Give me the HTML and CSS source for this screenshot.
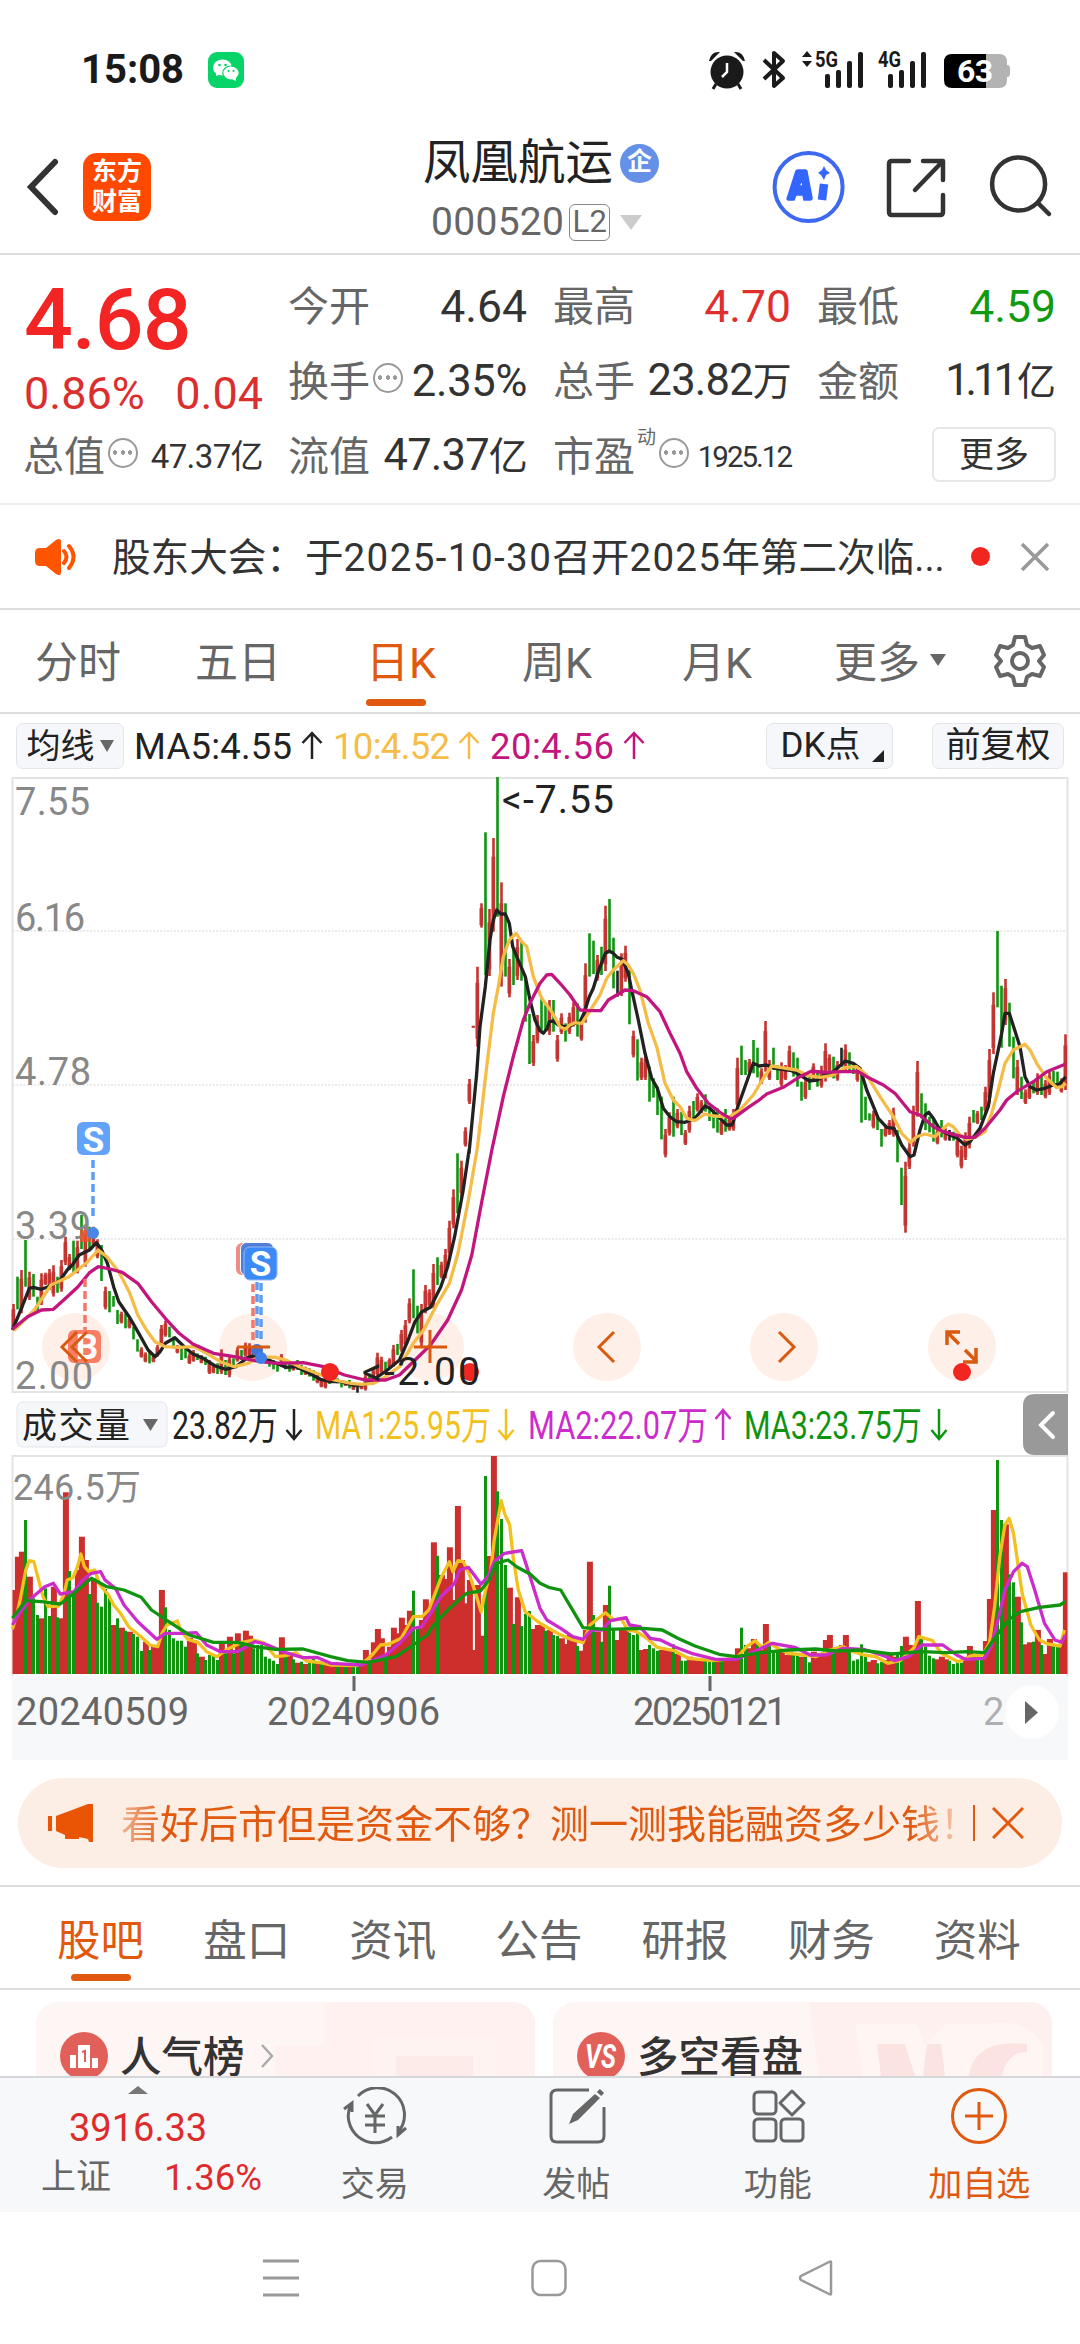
FILE: index.html
```html
<!DOCTYPE html>
<html lang="zh-CN">
  <head>
    <meta charset="utf-8" />
    <meta name="viewport" content="width=device-width, initial-scale=1.0" />
    <title>凤凰航运 000520</title>
    <link rel="stylesheet" href="styles.css">
  </head>
  <body>
    <div class="statusbar">
      <span class="clock">15:08</span>
      <svg class="wechat" width="36" height="36" viewBox="0 0 36 36">
        <rect width="36" height="36" rx="9" fill="#07d468"/>
        <ellipse cx="14.500" cy="15.500" rx="9.500" ry="8" fill="#fff"/>
        <path d="M8 20v4l5-2z" fill="#fff"/>
        <ellipse cx="23" cy="21" rx="8.200" ry="7" fill="#fff" stroke="#07d468" stroke-width="1.200"/>
        <path d="M24 27l4 2v-4z" fill="#fff"/>
        <circle cx="11.500" cy="13" r="1.300" fill="#07d468"/><circle cx="17.500" cy="13" r="1.300" fill="#07d468"/>
        <circle cx="20.500" cy="19" r="1.100" fill="#07d468"/><circle cx="25.500" cy="19" r="1.100" fill="#07d468"/>
      </svg>
      <svg class="sysicons" width="306" height="40" viewBox="0 0 306 40">
        <g fill="#1a1a1a">
          <circle cx="19" cy="22" r="16.500"/>
          <path d="M1 11Q3 1 12 2L3 11zM37 11Q35 1 26 2L35 11z"/>
          <path d="M8 34l-3 5M30 34l3 5" stroke="#1a1a1a" stroke-width="3"/>
          <path d="M19 13v9l-5 5" fill="none" stroke="#fff" stroke-width="2.500"/>
          <path d="M56 10l19 18-9 8V3l9 8-19 18" fill="none" stroke="#1a1a1a" stroke-width="4" stroke-linejoin="round"/>
          <path d="M94 7l5-6 5 6zM94 11l5 6 5-6z"/>
          <rect x="117" y="24" width="5" height="14" rx="2"/><rect x="128" y="20" width="5" height="18" rx="2"/><rect x="139" y="11" width="5" height="27" rx="2"/><rect x="150" y="2" width="5" height="36" rx="2"/>
          <rect x="180" y="24" width="5" height="14" rx="2"/><rect x="191" y="20" width="5" height="18" rx="2"/><rect x="202" y="11" width="5" height="27" rx="2"/><rect x="213" y="2" width="5" height="36" rx="2"/>
          <text class="net" x="107" y="17" textLength="23" lengthAdjust="spacingAndGlyphs">5G</text>
          <text class="net" x="170" y="17" textLength="23" lengthAdjust="spacingAndGlyphs">4G</text>
        </g>
        <path d="M278 4h13q8 0 8 8v3q3 0 3 3v6q0 3-3 3v3q0 8-8 8h-13z" fill="#b3b3b3"/>
        <path d="M278 4h-34q-8 0-8 8v18q0 8 8 8h34z" fill="#000"/>
        <text class="batt" x="249" y="32" textLength="36">63</text>
      </svg>
    </div>

    <div class="header">
      <svg class="back" width="34" height="60" viewBox="0 0 34 60"><path d="M30 5L6 30l24 25" fill="none" stroke="#333" stroke-width="6" stroke-linecap="round"/></svg>
      <div class="applogo">东方<br>财富</div>
      <div class="name">
        <div class="title"><span>凤凰航运</span><span class="qi">企</span></div>
        <div class="code">000520<span class="l2">L2</span><i class="tri"></i></div>
      </div>
      <svg class="tools" width="290" height="76" viewBox="0 0 290 76" fill="none" stroke="#333" stroke-width="4.500" stroke-linecap="round" stroke-linejoin="round">
        <circle cx="38.600" cy="38" r="34" stroke="#3d68f0" stroke-width="4"/>
        <path d="M17 50l9-28q1-1 2-1h7q2 0 2 2l5 26q0 2-2 2h-6l-1-5h-7l-2 5h-6zM29 37h4l-1-6z" fill="#3366ff" fill-rule="evenodd" stroke="#3366ff" stroke-width="1.500"/>
        <path d="M54 35l-2 16" stroke="#3366ff" stroke-width="8.500" stroke-linecap="butt"/>
        <path d="M54 17l2 4 4 3-4 2-2 5-3-5-3-2 4-3z" fill="#3366ff" stroke="none"/>
        <path d="M139 12h-17q-3 0-3 3v48q0 3 3 3h48q3 0 3-3V46M153 12h20v19M172 13l-27 28"/>
        <circle cx="248.600" cy="35" r="26.500"/><path d="M268 54l11 11"/>
      </svg>
    </div>

    <div class="quote">
      <div class="now">
        <div class="price">4.68</div>
        <div class="change"><span>0.86%</span><span>0.04</span></div>
        <div class="item"><b>总值</b><i class="more-dot"></i><em class="small">47.37亿</em></div>
      </div>
      <div class="stats">
        <div class="item"><b>今开</b><em>4.64</em></div>
        <div class="item"><b>最高</b><em class="up">4.70</em></div>
        <div class="item"><b>最低</b><em class="down">4.59</em></div>
        <div class="item"><b>换手</b><i class="more-dot"></i><em class="rate">2.35%</em></div>
        <div class="item"><b>总手</b><em class="amount">23.82<small>万</small></em></div>
        <div class="item"><b>金额</b><em class="amount ones">1.11<small>亿</small></em></div>
        <div class="item"><b>流值</b><em class="amount">47.37<small>亿</small></em></div>
        <div class="item"><b>市盈</b><sup>动</sup><i class="more-dot"></i><em class="pe">1925.12</em></div>
        <div class="item"><span class="more-btn">更多</span></div>
      </div>
    </div>

    <div class="notice">
      <svg class="horn" width="46" height="38" viewBox="0 0 46 38">
        <path d="M2 15q0-5 5-5h6L23 2q5-3 5 2v30q0 5-5 2L13 28H7q-5 0-5-5z" fill="#ff5500"/>
        <path d="M31 13q5 6 0 12M36 8q9 11 0 22" fill="none" stroke="#ff5500" stroke-width="4" stroke-linecap="round"/>
      </svg>
      <span class="notice-text">股东大会：于<span class="date">2025-10-30</span>召开<span class="year">2025</span>年第二次临...</span>
      <i class="reddot"></i>
      <svg class="close" width="30" height="30" viewBox="0 0 30 30"><path d="M2 2l26 26M28 2L2 28" stroke="#999" stroke-width="3.500"/></svg>
    </div>

    <div class="periods">
      <span>分时</span><span>五日</span><span class="on">日K</span><span>周K</span><span>月K</span><span class="more">更多<i></i></span>
      <svg class="gear" width="52" height="54" viewBox="0 0 52 54" fill="none" stroke="#666" stroke-width="4">
        <path d="M21 3h10l2 8 5 3 8-2 4 9-5 6 5 6-4 9-8-2-5 3-2 8H21l-2-8-5-3-8 2-4-9 5-6-5-6 4-9 8 2 5-3z" stroke-linejoin="round"/>
        <circle cx="26" cy="27" r="8"/>
      </svg>
    </div>

    <div class="malist">
      <span class="pill ma-pill">均线<i></i></span>
      <svg class="matext" width="520" height="50" viewBox="0 0 520 50">
        <text x="0" y="38" fill="#222" textLength="158">MA5:4.55</text>
        <text x="199" y="38" fill="#f5bd48" textLength="117">10:4.52</text>
        <text x="356" y="38" fill="#c3157e" textLength="124">20:4.56</text>
        <g fill="none" stroke-width="2.500">
          <path d="M178 38V13M168.500 22l9.500-10 9.500 10" stroke="#222"/>
          <path d="M335 38V13M325.500 22l9.500-10 9.500 10" stroke="#f5bd48"/>
          <path d="M500 38V13M490.500 22l9.500-10 9.500 10" stroke="#c3157e"/>
        </g>
      </svg>
      <span class="pill dk-pill">DK点<i></i></span>
      <span class="pill">前复权</span>
    </div>

    <div class="chart">
      <svg id="kchart" width="1080" height="985" viewBox="0 777 1080 985">
        <rect x="12" y="1676" width="1056" height="84" fill="#f7f8fa"/>
        <g fill="none" stroke="#e3e3e3" stroke-width="2">
          <rect x="12.500" y="778" width="1055" height="614"/>
          <path d="M12.500 1676V1456H1067.500V1676"/>
          <path d="M13 931H1067M13 1085H1067M13 1239H1067" stroke-width="1.500" stroke-dasharray="2 1.500"/>
        </g>
        <g fill="#fef0e8">
          <circle cx="76" cy="1347" r="34"/><circle cx="253" cy="1347" r="34"/><circle cx="430" cy="1347" r="34"/>
          <circle cx="607" cy="1347" r="34"/><circle cx="784" cy="1347" r="34"/><circle cx="962" cy="1347" r="34"/>
        </g>
        <g id="candles"></g>
        <g id="volumes"></g>
        <g id="averages" fill="none" stroke-width="3.300" stroke-linejoin="round"></g>

        <g class="axis">
          <text x="15" y="815" textLength="75">7.55</text>
          <text x="15" y="931" textLength="70">6.16</text>
          <text x="15" y="1085" textLength="76">4.78</text>
          <text x="15" y="1239" textLength="76">3.39</text>
          <text x="15" y="1389" textLength="78">2.00</text>
          <text x="13" y="1500" textLength="128">246.5万</text>
        </g>
        <g class="dates">
          <text x="16" y="1725" textLength="173">20240509</text>
          <text x="267" y="1725" textLength="173">20240906</text>
          <text x="633" y="1725" textLength="154">20250121</text>
          <text x="983" y="1725" fill-opacity=".5">2</text>
        </g>
        <path d="M354 1676v15M710 1676v15" stroke="#666" stroke-width="3"/>
        <circle cx="1032" cy="1712" r="27" fill="#fff"/>
        <path d="M1025 1701v23l13-11.500z" fill="#666"/>

        <!-- volume header -->
        <rect x="17" y="1402" width="150" height="45" rx="6" fill="#f6f7fa" stroke="#e3e5e9"/>
        <path d="M143 1419h15l-7.500 12z" fill="#666"/>
        <g class="volhead">
          <text x="22" y="1438" textLength="108" fill="#222">成交量</text>
          <text x="172" y="1439" textLength="106" lengthAdjust="spacingAndGlyphs" fill="#222">23.82万</text>
          <text x="315" y="1439" textLength="176" lengthAdjust="spacingAndGlyphs" fill="#f2c11e">MA1:25.95万</text>
          <text x="528" y="1439" textLength="180" lengthAdjust="spacingAndGlyphs" fill="#cc2ccc">MA2:22.07万</text>
          <text x="744" y="1439" textLength="178" lengthAdjust="spacingAndGlyphs" fill="#109410">MA3:23.75万</text>
        </g>
        <g fill="none" stroke-width="2.500">
          <path d="M294 1409v29M286.500 1430l7.500 9 7.500-9" stroke="#222"/>
          <path d="M506 1409v29M498.500 1430l7.500 9 7.500-9" stroke="#f2c11e"/>
          <path d="M723 1440v-29M715.500 1419l7.500-9 7.500 9" stroke="#cc2ccc"/>
          <path d="M939 1409v29M931.500 1430l7.500 9 7.500-9" stroke="#109410"/>
        </g>
        <path d="M1068 1394h-33q-12 0-12 12v37q0 12 12 12h33z" fill="#999"/>
        <path d="M1053 1413l-12 12 12 12" fill="none" stroke="#fff" stroke-width="4" stroke-linecap="round"/>

        <!-- buy / sell markers -->
        <rect x="80" y="1230" width="11" height="12" fill="#f0522f" fill-opacity=".8"/>
        <circle cx="93" cy="1233" r="6" fill="#4a86e8"/>
        <g fill="none" stroke-width="3.500" stroke-dasharray="8 4">
          <path d="M93 1160v57M257 1282v58M261 1283v58" stroke="#5d9df5"/>
          <path d="M85 1279v56M253 1284v58" stroke="#f4776a"/>
        </g>
        <circle cx="257" cy="1350" r="6" fill="#3f75d8"/><circle cx="261" cy="1358" r="6" fill="#3f7fe8"/>
        <g class="marks">
          <rect x="77" y="1122" width="33" height="33" rx="6" fill="#62a3f9"/><text x="93.500" y="1152">S</text>
          <rect x="68" y="1330" width="33" height="33" rx="6" fill="#fa7d66"/><text x="87" y="1359">B</text>
          <rect x="236" y="1243" width="33" height="32" rx="6" fill="#ee8d86"/>
          <rect x="240.500" y="1242.500" width="33" height="33" rx="6" fill="#527fd5" stroke="#fff"/>
          <rect x="244" y="1247" width="33" height="33" rx="6" fill="#3d89f5" stroke="#8fbbf8"/><text x="260.500" y="1276">S</text>
        </g>

        <!-- chart controls -->
        <g fill="none" stroke="#d9590f" stroke-width="3">
          <path d="M77 1332l-15 15 15 15M87 1332l-15 15 15 15M237 1347h33M414 1347h33M430 1330v33"/>
          <path d="M614 1332l-15 15 15 15M779 1332l15 15-15 15"/>
          <path d="M947 1345v-13h13M947 1332l12 12M965 1350l12 12M963 1362h13v-14" stroke-width="3.500"/>
        </g>
        <g fill="#f22621"><circle cx="330" cy="1372" r="9"/><circle cx="470" cy="1372" r="9"/><circle cx="962" cy="1372" r="9"/></g>
        <g class="peak">
          <text x="502" y="813" textLength="112">&lt;-7.55</text>
          <text x="362" y="1385" textLength="118">&lt;-2.00</text>
        </g>
      </svg>
    </div>

    <div class="promo">
      <svg class="promo-icon" width="46" height="40" viewBox="0 0 46 40" fill="#e95504"><path d="M0 13h4v15H0zM8 13L40 1h5v38h-4l-1-3-9-2v2H17v-4l-9-4z"/></svg>
      <span class="promo-text">看好后市但是资金不够？测一测我能融资多少钱！</span>
      <i class="bar"></i>
      <svg width="32" height="32" viewBox="0 0 32 32"><path d="M1 1l30 30M31 1L1 31" stroke="#e0590f" stroke-width="3"/></svg>
    </div>

    <div class="infotabs">
      <span class="on">股吧</span><span>盘口</span><span>资讯</span><span>公告</span><span>研报</span><span>财务</span><span>资料</span>
    </div>

    <div class="cards">
      <div class="card">
        <svg class="card-bg" width="260" height="74" viewBox="0 0 260 74" fill="#fdebea"><path d="M49 0h211v74H0V44h49z" opacity=".5"/><path d="M98 34h122v40H98z" fill="#fff3f1"/><path d="M121 54h77v20h-77z"/></svg>
        <svg class="badge" width="48" height="48" viewBox="0 0 48 48">
          <circle cx="24" cy="24" r="24" fill="#e2605a"/>
          <path d="M10 23h6v13h-6zM18 13h12v23H18zM32 26h6v10h-6z" fill="#fff"/>
          <path d="M22 20l3-1v11" fill="none" stroke="#e2605a" stroke-width="2"/>
        </svg>
        <span>人气榜</span>
        <svg class="arrow" width="14" height="26" viewBox="0 0 14 26"><path d="M2 2l10 11L2 24" fill="none" stroke="#aaa" stroke-width="2.500"/></svg>
      </div>
      <div class="card">
        <svg class="card-bg" width="243" height="74" viewBox="0 0 243 74"><path d="M0 0h243v74H10z" fill="#fdf0ef"/><path d="M46 22h62l8 22 20-22h40q40-8 58 20v32H54z" fill="#fff5f3"/><path d="M68 42h28l10 32H72zM132 42h-14l-4 32h22zM160 74q5-38 58-32v8q-20 0-25 24z" fill="#fbe3e2"/></svg>
        <svg class="badge" width="48" height="48" viewBox="0 0 48 48">
          <circle cx="24" cy="24" r="24" fill="#e2605a"/>
          <text class="vs" x="8" y="36" textLength="31" lengthAdjust="spacingAndGlyphs">VS</text>
        </svg>
        <span>多空看盘</span>
      </div>
    </div>

    <div class="bottombar">
      <div class="index">
        <i class="caret"></i>
        <div class="points">3916.33</div>
        <div class="pct"><span>上证</span><em>1.36%</em></div>
      </div>
      <div class="act">
        <svg width="64" height="60" viewBox="0 0 64 60" fill="none" stroke="#666" stroke-width="3">
          <path d="M15 9A27 27 0 0 1 56 44M49 50A27 27 0 0 1 8 17M1 22l8-6v9M63 41l-8 7v-9"/>
          <path d="M24 17l8 11 8-11M32 28v18M22 29h20M22 38h20"/>
        </svg>
        <span>交易</span>
      </div>
      <div class="act">
        <svg width="64" height="60" viewBox="0 0 64 60" fill="none" stroke="#666" stroke-width="3">
          <path d="M45 3H13q-6 0-6 6v40q0 6 6 6h41q6 0 6-6V20"/>
          <path d="M25 37l4-10L51 7l5 4-22 22z" fill="#666" stroke="none"/><path d="M55 7l3-3" stroke-width="6"/>
        </svg>
        <span>发帖</span>
      </div>
      <div class="act">
        <svg width="64" height="60" viewBox="0 0 64 60" fill="none" stroke="#666" stroke-width="3">
          <rect x="8" y="5" width="22" height="22" rx="4"/><rect x="8" y="32" width="22" height="22" rx="4"/><rect x="35" y="32" width="22" height="22" rx="4"/>
          <path d="M46 4l12 12-12 12-12-12z" stroke-linejoin="round"/>
        </svg>
        <span>功能</span>
      </div>
      <div class="act add">
        <svg width="64" height="60" viewBox="0 0 64 60" fill="none" stroke="#e0590f" stroke-width="3"><circle cx="32" cy="29" r="26.500"/><path d="M18 29h28M32 15v28"/></svg>
        <span>加自选</span>
      </div>
    </div>

    <div class="sysnav">
      <svg width="36" height="38" viewBox="0 0 36 38"><path d="M0 2h36M0 19h36M0 36h36" stroke="#999" stroke-width="3"/></svg>
      <svg width="36" height="38" viewBox="0 0 36 38"><rect x="1.500" y="2" width="33" height="34" rx="8" fill="none" stroke="#999" stroke-width="2.500"/></svg>
      <svg width="36" height="38" viewBox="0 0 36 38"><path d="M33 3v32q0 1-2 0L3 21q-2-2 0-4L31 3q2-1 2 0z" fill="none" stroke="#999" stroke-width="2.500"/></svg>
    </div>

    <script src="chart.js"></script>
  </body>
</html>
```
FILE: styles.css
```css
* {
    box-sizing: border-box;
}

body {
    margin: 0;
    width: 1080px;
    height: 2344px;
    overflow: hidden;
    background: #fff;
    color: #333;
    font-family: Roboto, "Noto Sans CJK SC", sans-serif;
    font-weight: 400;
}

i, em, b {
    font-style: normal;
    font-weight: inherit;
}

svg {
    display: block;
    flex: none;
}

/* phone status bar */
.statusbar {
    display: flex;
    align-items: center;
    height: 140px;
    padding-left: 81px;
}

.clock {
    width: 127px;
    margin-top: -2px;
    font-size: 40px;
    font-weight: 700;
    color: #1a1a1a;
}

.sysicons {
    margin-left: 464px;
    margin-top: -1px;
}

.net {
    font-size: 22px;
    font-weight: 700;
}

.batt {
    font-size: 32px;
    font-weight: 700;
    fill: #fff;
}

/* header */
.header {
    display: flex;
    height: 115px;
    padding-left: 25px;
    border-bottom: 2px solid #ddd;
}

.back {
    margin-top: 17px;
}

.applogo {
    width: 68px;
    height: 68px;
    margin: 13px 0 0 24px;
    padding-top: 4px;
    border-radius: 14px;
    background: #ff4800;
    color: #fff;
    font-size: 25px;
    font-weight: 700;
    line-height: 30px;
    text-align: center;
}

.name {
    width: 250px;
    margin-left: 272px;
}

.title {
    display: flex;
    align-items: center;
    height: 48px;
    font-size: 47.5px;
    line-height: 48px;
    color: #222;
}

.title span:first-child {
    margin-top: -2px;
}

.qi {
    width: 39px;
    height: 39px;
    margin: -2px 0 0 7px;
    border-radius: 50%;
    background: #6490e8;
    color: #fff;
    font-size: 25px;
    font-weight: 700;
    line-height: 36px;
    text-align: center;
}

.code {
    display: flex;
    align-items: center;
    height: 38px;
    margin: 15px 0 0 8px;
    font-size: 39px;
    letter-spacing: 0.3px;
    color: #666;
}

.l2 {
    width: 41px;
    height: 37px;
    margin-left: 5px;
    border: 1.5px solid #888;
    border-radius: 6px;
    font-size: 31px;
    line-height: 34px;
    text-align: center;
}

.tri {
    margin-left: 10px;
    border: 11px solid transparent;
    border-top: 15px solid #ccc;
    border-bottom: 0;
}

.tools {
    margin: 9px 0 0 97px;
}

/* quote */
.quote {
    display: flex;
    height: 250px;
    border-bottom: 2px solid #eee;
}

.now {
    width: 289px;
    padding: 27px 26px 0 24px;
}

.price {
    height: 73px;
    font-size: 86px;
    font-weight: 500;
    line-height: 75px;
    letter-spacing: -1px;
    color: #f22424;
}

.change {
    display: flex;
    justify-content: space-between;
    height: 63px;
    line-height: 78px;
    font-size: 45px;
    color: #db2f2f;
}

.item {
    display: flex;
    align-items: center;
    height: 75px;
    line-height: 60px;
    white-space: nowrap;
}

.now .item {
    margin-top: 1px;
}

.item b {
    margin-left: -1px;
    font-size: 41px;
    color: #666;
}

.item em {
    margin-left: auto;
    font-size: 44.5px;
}

.item .rate {
    font-size: 43.5px;
    letter-spacing: -0.3px;
}

.item .small {
    font-size: 33px;
    letter-spacing: -0.6px;
}

.amount small {
    font-size: 39px;
}

.item .amount {
    font-size: 43.5px;
    letter-spacing: -0.8px;
}

.item .ones {
    letter-spacing: -4px;
}

.ones small {
    letter-spacing: 0;
    margin-left: 3px;
}

.item .pe {
    font-size: 29.5px;
    letter-spacing: -2px;
}

.item .up {
    color: #e02e2e;
}

.item .down {
    color: #109a10;
}

.item sup {
    align-self: flex-start;
    margin: 5px 0 0 2px;
    font-size: 19px;
    line-height: 28px;
    color: #666;
}

.more-dot {
    width: 30px;
    height: 30px;
    margin: -8px 0 0 3px;
    border: 2.5px solid #999;
    border-radius: 50%;
    background: radial-gradient(circle, #999 2px, transparent 2.5px) center / 8px 25px no-repeat, radial-gradient(circle, #999 2px, transparent 2.5px) 1px / 8px 25px no-repeat, radial-gradient(circle, #999 2px, transparent 2.5px) 16px / 8px 25px no-repeat;
}

.stats {
    display: grid;
    grid-template-columns: 238px 237px 238px;
    column-gap: 27px;
    align-content: start;
    padding-top: 14px;
}

.more-btn {
    width: 124px;
    height: 55px;
    margin: -4px 0 0 auto;
    border: 2px solid #e6e8e8;
    border-radius: 7px;
    font-size: 35px;
    line-height: 53px;
    text-align: center;
}

/* notice */
.notice {
    display: flex;
    align-items: center;
    height: 105px;
    padding-left: 33px;
    border-bottom: 2px solid #ddd;
}

.notice-text {
    width: 838px;
    margin: -6px 0 0 33px;
    font-size: 38.6px;
    white-space: nowrap;
}

.date {
    letter-spacing: 1.4px;
}

.year {
    letter-spacing: 1.3px;
}

.reddot {
    width: 19px;
    height: 19px;
    margin-left: 21px;
    border-radius: 50%;
    background: #f22621;
}

.close {
    margin-left: 30px;
}

/* chart periods */
.periods {
    display: flex;
    align-items: center;
    height: 104px;
    padding-left: 35px;
    border-bottom: 2px solid #ddd;
    font-size: 43px;
    color: #666;
}

.periods span {
    padding-top: 4px;
    width: 160px;
    line-height: 104px;
}

.periods .on {
    width: 156px;
    margin-left: 11px;
}

.periods .more {
    display: flex;
    align-items: center;
    width: 160px;
    margin-left: -8px;
}

.periods .more i {
    margin: -6px 0 0 10px;
    border: 8px solid transparent;
    border-top: 12px solid #666;
    border-bottom: 0;
}

.on {
    position: relative;
    color: #e0590f;
}

.on::after {
    content: "";
    position: absolute;
    left: 0;
    bottom: 9px;
    width: 60px;
    height: 7px;
    border-radius: 4px;
    background: #e0590f;
}

/* moving average row */
.malist {
    display: flex;
    align-items: center;
    height: 63px;
    padding-left: 16px;
}

.pill {
    display: flex;
    align-items: center;
    justify-content: center;
    width: 132px;
    height: 46px;
    border: 1.5px solid #e3e5e9;
    border-radius: 7px;
    background: #f6f7fa;
    font-size: 35px;
    line-height: 40px;
    color: #222;
}

.ma-pill {
    width: 108px;
    font-size: 34px;
}

.ma-pill i {
    margin-left: 5px;
    border: 7px solid transparent;
    border-top: 12px solid #666;
    border-bottom: 0;
}

.dk-pill {
    width: 127px;
    margin: 0 39px 0 auto;
}

.malist .pill:last-child {
    margin-right: 16px;
}

.dk-pill i {
    align-self: flex-end;
    margin: 0 -6px 6px 12px;
    border: 6px solid #222;
    border-top-color: transparent;
    border-left-color: transparent;
}

.matext {
    margin-left: 10px;
    font-size: 36.5px;
}

/* chart texts */
.axis {
    font-size: 38px;
    fill: #888;
}

.axis text:last-child {
    font-size: 36px;
}

.dates {
    font-size: 38px;
    fill: #666;
}

.volhead {
    font-size: 39px;
}

.volhead text:first-child {
    font-size: 35px;
}

.marks {
    font-size: 35px;
    font-weight: 700;
    fill: #fff;
    text-anchor: middle;
}

.peak {
    font-size: 39px;
    fill: #222;
}

/* promo strip */
.promo {
    display: flex;
    align-items: center;
    width: 1044px;
    height: 90px;
    margin: 16px 0 17px 18px;
    padding-left: 30px;
    border-radius: 45px;
    background: #fcede5;
    color: #e0590f;
}

.promo-text {
    width: 848px;
    margin: -5px 0 0 27px;
    overflow: hidden;
    font-size: 39px;
    white-space: nowrap;
    -webkit-mask-image: linear-gradient(90deg, rgba(0,0,0,.4), #000 45px, #000 790px, rgba(0,0,0,.25) 835px);
}

.promo .bar {
    width: 2px;
    height: 36px;
    margin: 0 17px 0 4px;
    background: #e0590f;
}

/* info tabs */
.infotabs {
    display: flex;
    height: 105px;
    padding-left: 57px;
    border-top: 2px solid #ddd;
    border-bottom: 2px solid #ddd;
    font-size: 43.5px;
    line-height: 109px;
    color: #666;
}

.infotabs span {
    width: 146.500px;
}

.infotabs .on::after {
    left: 14px;
    bottom: 7px;
}

/* cards, cut off by the bottom bar */
.cards {
    display: flex;
    gap: 18px;
    height: 86px;
    padding: 12px 0 0 36px;
    overflow: hidden;
}

.card {
    position: relative;
    display: flex;
    align-items: center;
    width: 499px;
    height: 108px;
    padding-left: 24px;
    overflow: hidden;
    border-radius: 22px;
    background: #fef6f4;
    font-size: 41.5px;
    font-weight: 500;
}

.card-bg {
    position: absolute;
    right: 0;
    top: 0;
}

.badge {
    margin-right: 12px;
}

.card span {
    z-index: 1;
    margin-top: -5px;
}

.arrow {
    margin-left: 15px;
}

.vs {
    font-size: 33px;
    font-weight: 700;
    font-style: italic;
    fill: #fff;
}

/* bottom bar */
.bottombar {
    position: relative;
    display: flex;
    height: 136px;
    border-top: 2px solid #d5d7da;
    background: #f7f8fa;
    color: #666;
}

.index {
    width: 274px;
    padding-top: 8px;
    color: #dd2c2c;
}

.caret {
    display: block;
    width: 20px;
    margin-left: 128px;
    border: 10px solid transparent;
    border-top: 0;
    border-bottom: 8px solid #777;
}

.points {
    height: 62px;
    padding-left: 69px;
    font-size: 38px;
    line-height: 68px;
}

.pct {
    display: flex;
    justify-content: space-between;
    padding: 0 12px 0 41px;
    font-size: 36.5px;
    line-height: 43px;
}

.pct span {
    font-size: 35px;
    color: #666;
}

.act {
    display: flex;
    flex-direction: column;
    align-items: center;
    width: 201.500px;
    padding-top: 9px;
    font-size: 34px;
}

.act span {
    line-height: 74px;
}

.add {
    color: #e0590f;
}

/* system navigation */
.sysnav {
    display: flex;
    gap: 231.500px;
    height: 132px;
    padding: 47px 0 0 263px;
}
```
FILE: chart.js
```javascript
// One entry per trading day: colour, high and low, in thirds of a pixel below "top".
var days = [
  { from: 0, top: 1100, bars:
    "r612-690 g530-628 r510-640 g420-560 r515-600 g522-590 g590-635 r520-615 r518-555 r507-570 r496-590 g530-578 " +
    "r480-575 r410-495 r462-510 g422-518 r422-520 g345-447 r375-500 g380-450 r380-440 r418-475 g435-543 r560-628 " +
    "g573-637 g588-620 g630-672 r635-670 g640-685 r650-685 g680-718 g718-755 r742-773 r757-787 g755-790 r765-787 " +
    "r735-770 r675-735 r662-710 g680-712 g710-745 r735-760 g740-780 g745-775 r760-792 r750-785 g760-780 r765-790 " +
    "g770-795 r780-822 r795-820 g790-822 r748-822 g780-825 r765-832 g775-800 r742-785 g750-780 r728-770 r730-770 " +
    "r740-775 g745-775 g755-785 g770-790 g775-800 g780-808 g785-815 r762-800 g780-808 g785-815 r790-812 g780-810 " +
    "g795-825 r800-825 g805-830 g810-842 r820-850 r835-862 r830-865 g830-852 r830-845 g835-850 g842-862 r845-858 " +
    "g840-865 r850-870 k855-878 r850-868 r820-872 g820-850 r805-840 r758-830 r770-820 g785-810 r775-805 r735-800 " +
    "g732-765 r690-755 r660-740 r595-670 g508-655 g617-700 r612-740 r555-640 r568-620 r492-625 g472-555 r485-535 " +
    "r447-535 r362-470 r268-385 g160-340 r182-290 r82-140" },
  { from: 114, top: 760, bars:
    "r957-1032 r797-803 r620-860 r430-503 g217-645 r447-648 r234-515 g50-470 r367-680 g430-650 r597-712 g570-675 " +
    "r537-660 g545-662 g660-785 g762-912 r825-918 r765-850 g712-812 g735-812 r720-825 g720-815 r825-905 r760-822 " +
    "g790-845 r758-822 r727-800 g730-830 r780-842 r610-788 g520-650 g542-642 r585-662 g560-645 r437-633 g417-580 " +
    "g533-685 k632-710 r580-708 r557-665 g630-793 r812-892 g838-962 r893-960 r880-960 g920-1025 g955-1013 g980-1065 " +
    "g1010-1138 r1107-1192 r1057-1127 g1010-1130 r1047-1105 g1055-1125 r1110-1155 r1037-1118 g1023-1075 r1000-1055 " +
    "r1020-1060 g1003-1055 g1040-1083 g1050-1105 g1045-1118 r1075-1125 g1047-1115 r1070-1112 r1047-1112" },
  { from: 181, top: 900, bars:
    "r473-630 g437-525 g480-525 r477-520 g420-520 g443-532 r505-552 r363-515 r480-540 g443-510 g495-540 r487-560 " +
    "r495-540 r437-515 g457-530 g473-560 g545-602 r535-597 g525-570 r490-540 g510-560 r497-563 r430-545 r463-515 " +
    "g470-535 r483-542 k443-500 r433-510 g457-510 g490-522 r495-545 g510-668 g590-660 g640-662 r632-685 g645-690 " +
    "g687-740 r680-710 r660-705 r623-710 g690-787 g803-915 r785-998 r727-807 r617-740 r483-650 g580-655 g610-690 " +
    "g650-697 g655-725 r685-733 g660-712 r685-722 k690-722 g695-722 r710-772 r737-805 r697-780 r650-745 g630-668 " +
    "r633-672 g620-660 r560-640 r447-610 r277-462 g93-322 g257-443 r237-375 g308-440 g410-535 r480-585 g530-597 " +
    "r568-612 r555-597 g545-580 r520-585 g530-585 r540-595 r515-585 g513-552 g515-560 r535-578 r403-570" }
];

// Volume bars: colour and top edge, same unit, below 1390.
var volumes =
  "r600 r500 r485 g390 r560 g625 g675 r685 g595 g678 r590 g682 r685 r307 g543 g612 r540 r440 r510 g612 r565 g638 " +
  "g650 g597 g625 r705 g685 r713 g722 r725 g732 g740 g783 r755 g780 r765 r770 r600 g652 g720 g745 g752 g752 g770 " +
  "r743 r750 g790 r800 g810 g795 g795 g810 r755 g790 r740 g790 r730 g760 r722 r737 g775 g765 g765 g800 g806 g812 " +
  "g822 r742 g795 r795 g808 r818 g815 r822 g815 g805 r815 g820 r820 r822 r822 g822 r825 g825 r825 g828 g825 r820 " +
  "r780 g815 r757 r717 r745 g795 r770 r713 r730 r683 r705 r662 g602 g715 r690 r628 r645 r457 g497 r555 r567 r472 " +
  "r630 r348 r510 r640 r570 r780 r585 r737 g258 r498 r198 g304 g387 g525 r593 g702 r622 g708 g672 g663 r717 r705 " +
  "r705 g722 r720 g735 g738 r745 r762 r735 r740 g768 r782 r720 r515 g675 r725 g755 r645 g587 g715 r750 r718 r718 " +
  "g728 g735 g728 r780 r777 g765 g775 g782 r780 r775 r780 g763 r792 g812 g812 r800 r805 r805 r808 g812 g812 g812 " +
  "r805 g812 r805 r803 r805 r775 g713 g765 r775 r747 g765 r780 r702 g768 g780 g780 r778 r795 r785 g790 g793 r800 " +
  "g800 g817 r785 r795 r790 r750 r735 g780 r780 r765 r735 g775 g812 g808 g763 g800 r815 r810 g820 g815 r810 r795 " +
  "r800 g790 g768 r740 r765 r780 r633 g745 g770 g797 g805 r808 r800 r808 g812 g822 g815 g818 r805 r768 r800 g797 " +
  "g810 r753 r627 r360 g210 g390 r403 g553 g577 r620 g697 r763 r757 g755 r720 g765 r792 r747 g765 g770 r760 r547";

// Averages: point lists with their own origin and x scale.
var W = 1568 / 540;
var averages = [
  { color: "#222", parts: [
    [0, 1100, W, "36,690 62,625 85,565 97,562 120,568 148,557 175,540 195,510 210,495 230,465 260,450 280,428 295,450 312,490 330,560 345,605 375,650 400,695 430,750 450,770 465,755 480,730 508,713 535,740 560,762 590,775 625,798 655,808 685,800 720,772 745,765 780,780 830,802 860,800 890,815 930,838 960,845 990,845 1030,857 1060,853 1090,835 1125,810 1160,780 1185,720 1205,665 1225,635 1250,622 1280,560 1300,500 1320,410 1345,270 1362,150"],
    [380, 760, 3, "267,1180 290,940 300,800 316,680 330,540 340,480 350,450 362,462 376,462 388,490 398,560 410,590 436,650 450,720 465,780 480,812 490,820 502,805 508,785 520,783 535,795 552,800 568,800 580,792 600,785 612,760 628,710 640,685 655,635 676,580 688,573 700,580 712,592 727,598 745,640 755,690 775,780 795,880 815,955 832,985 850,1045 870,1070 890,1085 915,1087 945,1075 975,1038 990,1045 1015,1070 1040,1095 1055,1095"],
    [720, 900, 3, "40,665 50,630 100,490 118,498 140,495 165,505 215,512 240,525 268,543 292,540 315,525 340,515 376,483 400,490 420,505 440,570 475,655 500,682 522,685 545,735 570,770 582,765 600,690 615,645 626,637 640,655 660,690 690,705 712,715 735,735 750,725 780,685 805,620 820,520 845,400 855,340 868,340 900,440 915,530 930,560 950,570 975,565 1000,555 1018,553 1037,530"]] },
  { color: "#f5bd48", parts: [
    [0, 1100, W, "40,692 100,630 148,555 200,530 250,490 285,450 310,470 345,515 375,575 400,645 425,690 450,725 480,740 520,742 565,740 600,760 640,785 680,800 720,790 755,770 800,772 830,780 870,800 920,820 970,840 1020,850 1050,853 1085,850 1120,830 1160,800 1200,730 1230,690 1265,620 1305,550 1330,460 1360,300 1385,150"],
    [380, 760, 3, "295,1140 320,920 340,760 355,680 370,590 388,540 408,520 425,545 440,560 460,650 485,715 515,755 540,800 555,808 570,795 585,788 605,790 625,760 660,705 680,655 700,630 730,602 745,615 760,640 780,690 805,790 830,860 855,970 880,1020 900,1040 920,1075 945,1082 975,1062 1000,1068 1030,1070 1050,1070"],
    [720, 900, 3, "30,650 60,630 100,585 130,535 155,498 180,502 230,510 265,527 300,532 335,527 375,503 410,500 440,525 480,590 520,650 545,700 572,727 590,710 615,702 645,710 665,690 685,672 700,680 720,705 740,718 765,712 795,695 815,640 835,570 855,490 880,450 915,433 930,450 950,490 980,535 1010,563 1025,560 1037,550"]] },
  { color: "#c3157e", parts: [
    [0, 1100, W, "36,688 80,650 120,630 155,628 185,600 225,562 260,518 285,500 320,507 355,517 400,550 440,605 480,655 520,700 560,732 620,760 680,770 740,782 800,790 880,788 940,800 1000,825 1060,840 1120,840 1160,825 1200,785 1250,735 1300,660 1340,570 1370,465 1400,300 1430,140"],
    [380, 760, 3, "340,1150 370,1010 400,890 430,780 450,730 480,670 500,645 515,643 540,670 570,705 600,750 630,752 662,752 685,720 710,705 735,690 760,692 800,710 840,755 870,820 900,880 920,935 950,985 985,1030 1020,1057 1050,1075"],
    [720, 900, 3, "40,655 85,622 115,602 140,582 190,562 240,530 275,513 310,517 370,515 415,515 440,530 490,555 525,580 570,635 600,645 640,680 670,695 735,712 765,712 795,685 840,630 860,600 890,575 940,545 980,515 1037,492"]] },
  { color: "#f2c11e", parts: [
    [0, 1390, W, "36,718 50,670 62,610 75,540 85,512 98,515 112,570 125,620 140,650 170,648 185,615 195,570 212,563 225,530 235,492 245,530 258,545 275,540 290,585 315,615 330,645 350,670 375,712 410,740 435,765 458,770 470,730 485,705 515,693 525,720 545,748 575,757 600,785 630,800 660,778 700,758 735,750 765,758 800,800 830,797 860,788 890,813 930,818 960,825 1035,827 1065,810 1085,790 1105,765 1130,762 1165,745 1200,680 1225,680 1245,660 1260,620 1280,565 1305,515 1315,545 1330,512 1345,515 1360,545 1378,600 1397,665 1410,600 1425,540 1435,450 1455,332 1465,370 1480,405 1490,500 1505,600 1525,665"],
    [540, 1390, W, "0,700 25,715 60,735 90,748 125,758 145,705 190,668 215,690 235,685 255,720 280,725 310,745 340,772 390,782 430,805 500,812 570,805 600,770 625,752 645,772 665,757 690,775 720,790 770,795 800,800 840,780 880,770 910,785 940,795 975,800 1010,820 1045,812 1085,775 1100,740 1140,752 1165,790 1215,815 1250,798 1285,795 1305,760 1320,650 1335,500 1350,405 1362,385 1375,430 1400,610 1425,705 1450,750 1475,762 1510,768 1523,720"]] },
  { color: "#cc2ccc", parts: [
    [0, 1390, W, "36,705 60,665 85,630 130,590 155,580 175,612 215,605 240,570 265,550 292,545 305,570 335,595 360,645 400,695 455,748 480,730 530,730 570,728 600,765 640,785 690,785 740,755 770,762 830,788 880,803 920,802 960,820 1050,825 1080,812 1120,795 1160,760 1200,715 1225,710 1250,670 1280,620 1320,580 1335,540 1360,532 1397,583 1420,555 1435,515 1465,490 1515,482 1530,530"],
    [540, 1390, W, "0,655 20,690 60,715 95,740 125,748 150,720 180,720 205,692 250,683 260,705 290,710 320,745 350,750 390,770 440,790 510,808 570,808 620,785 675,760 740,772 785,795 830,795 880,775 940,778 1000,798 1030,812 1070,800 1110,765 1170,765 1210,795 1235,808 1290,805 1310,770 1330,690 1350,600 1375,545 1400,520 1415,530 1435,595 1465,700 1495,750 1515,757 1525,735"]] },
  { color: "#109410", parts: [
    [0, 1390, W, "36,685 75,632 120,635 175,642 215,610 265,565 310,590 360,600 410,622 440,660 490,695 550,735 620,757 690,757 740,770 800,778 880,777 960,800 1010,812 1070,817 1150,800 1200,765 1240,735 1260,705 1300,660 1355,610 1395,603 1420,570 1440,520 1475,510 1500,530 1540,553"],
    [540, 1390, W, "0,580 25,592 60,600 80,635 125,713 190,718 300,715 355,720 400,745 450,768 520,793 570,800 640,788 720,780 800,777 860,783 930,780 1020,792 1110,785 1180,788 1240,785 1290,788 1320,745 1360,690 1395,665 1450,652 1510,645 1525,635"]] }
];

var fills = { r: "#c23531", g: "#109410", k: "#222" };

function rect(x, y, w, h, fill) {
  return '<rect x="' + x + '" y="' + y.toFixed(1) + '" width="' + w + '" height="' + h.toFixed(1) + '" fill="' + fill + '"/>';
}

var html = "";
days.forEach(function (seg) {
  seg.bars.split(" ").forEach(function (bar, n) {
    var range = bar.slice(1).split("-");
    var x = 13.5 + 4 * (seg.from + n);
    var y = seg.top + range[0] / 3;
    var h = (range[1] - range[0]) / 3;
    html += rect(x - 1.3, y, 2.6, h, fills[bar[0]]);
    if (bar[0] == "r") {
      html += rect(x - 2, y + h * 0.2, 3.7, h * 0.7, fills.r);
    }
  });
});
document.getElementById("candles").innerHTML = html;

// falling days are thin and lie over the wide rising ones
var wide = "";
var thin = "";
volumes.split(" ").forEach(function (bar, n) {
  var x = 13.5 + 4 * n;
  var y = 1390 + bar.slice(1) / 3;
  if (bar[0] == "r") {
    var left = Math.max(x - 2.6, 12.5);
    wide += rect(left, y, Math.min(6, 1067.5 - left), 1674 - y, "#cd2f2d");
  } else {
    thin += rect(x - 1.5, y, 3, 1674 - y, fills.g);
  }
});
document.getElementById("volumes").innerHTML = wide + thin;

html = "";
averages.forEach(function (line) {
  var points = [];
  line.parts.forEach(function (part) {
    part[3].split(" ").forEach(function (p) {
      var xy = p.split(",");
      points.push([part[0] + xy[0] / part[2], part[1] + xy[1] / 3]);
    });
  });
  html += '<polyline stroke="' + line.color + '" points="' + points.map(function (p) {
    return p[0].toFixed(1) + "," + p[1].toFixed(1);
  }).join(" ") + '"/>';
});
document.getElementById("averages").innerHTML = html;
```
